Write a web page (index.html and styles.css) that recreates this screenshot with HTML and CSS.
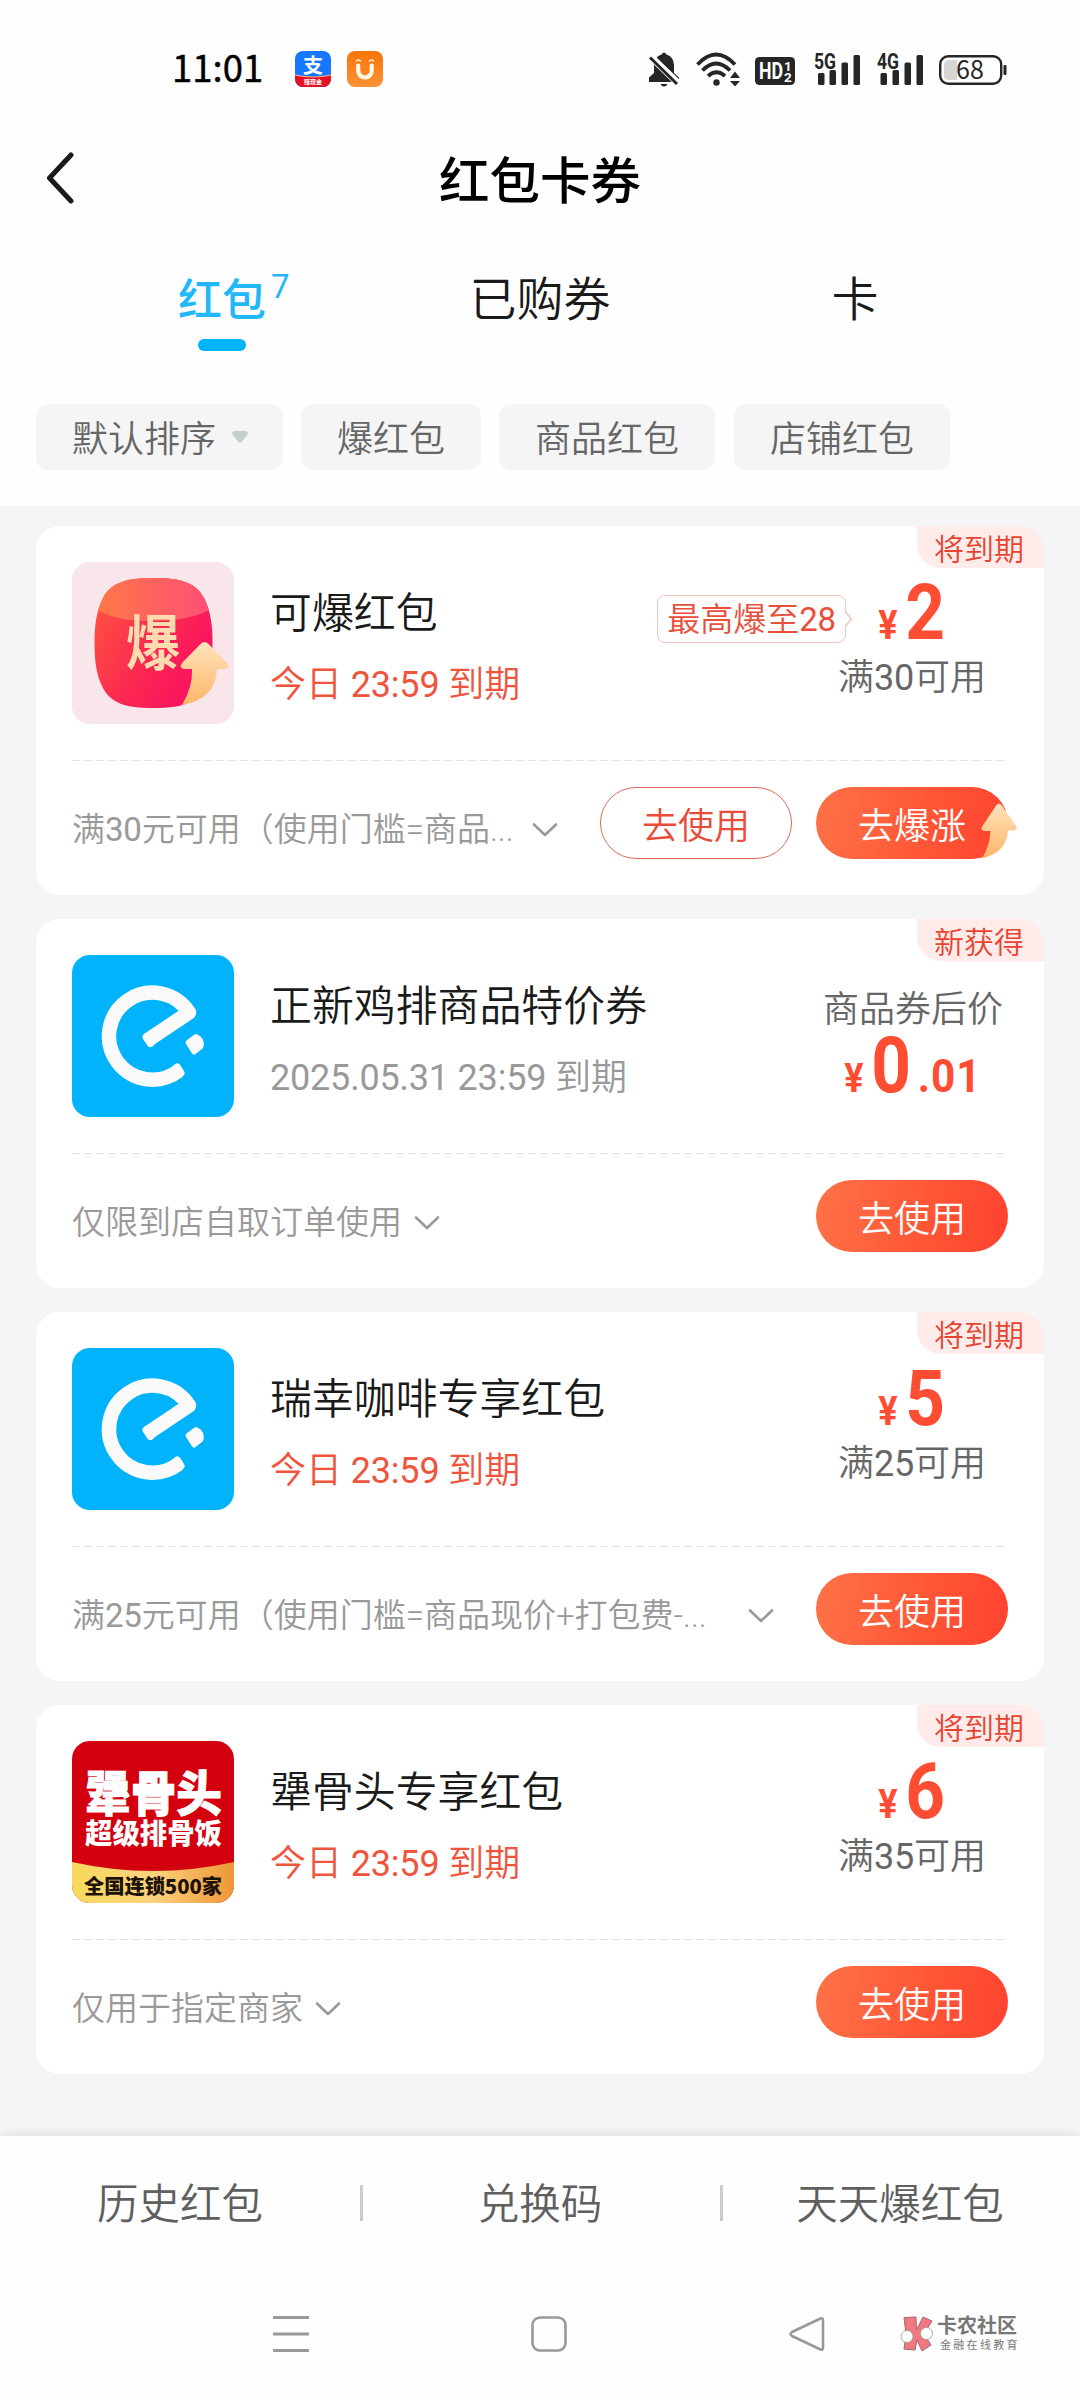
FILE: index.html
```html
<!DOCTYPE html>
<html lang="zh-CN">
<head>
<meta charset="utf-8">
<title>红包卡券</title>
<link rel="stylesheet" href="styles.css">
</head>
<body>
<svg class="defs" width="0" height="0" aria-hidden="true">
  <defs>
    <linearGradient id="arrowFill" x1="0" y1="0" x2="0" y2="1"><stop offset="0" stop-color="#ffe3bd"/><stop offset="1" stop-color="#fdb566"/></linearGradient>
    <symbol id="eleme" viewBox="0 0 162 162">
      <rect width="162" height="162" fill="#00b3fb"/>
      <path d="M106.500 116A43.500 43.500 0 1 1 117 57.500L76 85" fill="none" stroke="#fafafa" stroke-width="14.500" stroke-linejoin="round"/>
      <path d="M74.500 82L78.500 88M105 112.500L108.500 118" stroke="#fafafa" stroke-width="8" stroke-linecap="round"/>
      <path d="M116 87.500L124 81.500Q130.500 84 129 91.500L122 97Z" fill="#fafafa" stroke="#fafafa" stroke-width="5" stroke-linejoin="round"/>
    </symbol>
    <symbol id="chev" viewBox="0 0 26 16">
      <path d="M2 2.500L13 13L24 2.500" fill="none" stroke="#999" stroke-width="2.600" stroke-linecap="round" stroke-linejoin="round"/>
    </symbol>
  </defs>
</svg>

<header class="top">
  <div class="status">
    <span class="time">11:01</span>
    <svg class="app" viewBox="0 0 36 36">
      <defs><clipPath id="appClip"><rect width="36" height="36" rx="8"/></clipPath></defs>
      <g clip-path="url(#appClip)">
        <rect width="36" height="36" fill="#1677ff"/>
        <path d="M0 24Q18 28 36 24V36H0Z" fill="#e60f26"/>
        <path d="M0 24Q18 28 36 24" fill="none" stroke="#ffb48a" stroke-width="1"/>
      </g>
      <text class="app-glyph" x="18" y="21.500" text-anchor="middle">支</text>
      <text class="app-label" x="18" y="32.500" text-anchor="middle">赚现金</text>
    </svg>
    <svg class="app" viewBox="0 0 36 36">
      <defs><linearGradient id="uFill" x1="0" y1="0" x2="0" y2="1"><stop offset="0" stop-color="#f87505"/><stop offset="1" stop-color="#ff9138"/></linearGradient></defs>
      <rect width="36" height="36" rx="8" fill="url(#uFill)"/>
      <path d="M11.200 14.500V19.500A6.800 7 0 0 0 24.800 19.500V14.500" fill="none" stroke="#fff8e8" stroke-width="4.200" stroke-linecap="round"/>
      <path d="M9.400 10Q11.500 7.800 13.500 10M22.500 10Q24.500 7.800 26.600 10" fill="none" stroke="#fff0d8" stroke-width="1.500" stroke-linecap="round"/>
    </svg>
    <div class="signals">
      <svg class="s-bell" viewBox="0 0 30 40">
        <path d="M12.500 5.500Q15 1.500 17.500 5.500Q25 8 25 16V24L30 28.500V33H0V28.500L5 24V16Q5 8 12.500 5.500Z" fill="#262626"/>
        <path d="M11.500 35H18.500Q17.500 37.500 15 37.500Q12.500 37.500 11.500 35Z" fill="#262626"/>
        <path d="M-1 5L31 36" stroke="#fff" stroke-width="7"/>
        <path d="M1 8.500L28 35" stroke="#262626" stroke-width="3"/>
      </svg>
      <svg class="s-wifi" viewBox="0 0 44 40">
        <g fill="none" stroke="#262626" stroke-width="3.800">
          <path d="M1.500 15.500Q20 -4.500 39 15.500"/><path d="M6.500 21.500Q20 7.500 34 21.500"/><path d="M12 27Q20.500 19.500 29 27"/>
        </g>
        <circle cx="20.500" cy="33.500" r="3.200" fill="#262626"/>
        <path d="M39 22.500L44 29H34ZM39 37.500L44 32H34Z" fill="#262626"/>
      </svg>
      <svg class="s-hd" viewBox="0 0 40 40">
        <rect y="8" width="40" height="28" rx="4.500" fill="#262626"/>
        <text class="hd-main" x="4" y="30" textLength="24" lengthAdjust="spacingAndGlyphs">HD</text>
        <text class="hd-sub" x="29" y="21.500">1</text><text class="hd-sub" x="29" y="33">2</text>
      </svg>
      <svg class="s-5g" viewBox="0 0 46 40">
        <text class="net" x="0" y="19.500" textLength="22" lengthAdjust="spacingAndGlyphs">5G</text>
        <g fill="#262626"><rect x="4" y="24" width="6.500" height="12" rx="1.500"/><rect x="15.500" y="21" width="6.500" height="15" rx="1.500"/><rect x="27.500" y="13.500" width="6.500" height="22.500" rx="1.500"/><rect x="39.500" y="6" width="6.500" height="30" rx="1.500"/></g>
      </svg>
      <svg class="s-4g" viewBox="0 0 46 40">
        <text class="net" x="0" y="19.500" textLength="22" lengthAdjust="spacingAndGlyphs">4G</text>
        <g fill="#262626"><rect x="3.500" y="24" width="6.500" height="12" rx="1.500"/><rect x="15.500" y="21" width="6.500" height="15" rx="1.500"/><rect x="27.500" y="13.500" width="6.500" height="22.500" rx="1.500"/><rect x="39.500" y="6" width="6.500" height="30" rx="1.500"/></g>
      </svg>
      <svg class="s-bat" viewBox="0 0 68 40">
        <rect x="1.200" y="7.200" width="61" height="27.600" rx="8" fill="#fff" stroke="#262626" stroke-width="2.400"/>
        <path d="M18 11H10Q5 11 5 16V26Q5 31 10 31H18Z" fill="#d6d6d6"/>
        <rect x="64.500" y="16" width="3" height="10" rx="1" fill="#262626"/>
        <text class="bat" x="31" y="30" text-anchor="middle">68</text>
      </svg>
    </div>
  </div>
  <div class="titlebar">
    <svg class="back" viewBox="0 0 28 52"><path d="M25 3L3.500 26L25 49" fill="none" stroke="#1a1a1a" stroke-width="5" stroke-linecap="round" stroke-linejoin="round"/></svg>
    <h1>红包卡券</h1>
  </div>
  <nav class="tabs">
    <div class="tab active"><span class="tab-name">红包<sup class="count">7</sup></span><i class="bar"></i></div>
    <div class="tab"><span class="tab-name">已购券</span></div>
    <div class="tab"><span class="tab-name">卡</span></div>
  </nav>
  <div class="filters">
    <span class="chip">默认排序<svg class="caret" viewBox="0 0 16 12"><path d="M2 0H14Q17 1 15 4L10 10.500Q8 13 6 10.500L1 4Q-1 1 2 0Z" fill="#c5d1c8"/></svg></span>
    <span class="chip">爆红包</span>
    <span class="chip">商品红包</span>
    <span class="chip">店铺红包</span>
  </div>
</header>

<main class="list">
  <article class="card">
    <span class="tag">将到期</span>
    <div class="main">
      <svg class="thumb" viewBox="0 0 162 162">
        <defs>
          <linearGradient id="blob" x1="0" y1=".2" x2="1" y2=".8"><stop offset="0" stop-color="#ff5440"/><stop offset=".5" stop-color="#fb2850"/><stop offset="1" stop-color="#f80d66"/></linearGradient>
          <linearGradient id="lid" x1="0" y1="0" x2="1" y2="0"><stop offset="0" stop-color="#ff7a45"/><stop offset="1" stop-color="#fd4d78"/></linearGradient>
          <clipPath id="blobClip"><path d="M81.500 16C110 16 124 21 132 36C139 50 140.500 64 140.500 81C140.500 98 139 113 132 126C124 141 110 146 81.500 146C53 146 39 141 31 126C24 113 22.500 98 22.500 81C22.500 64 24 50 31 36C39 21 53 16 81.500 16Z"/></clipPath>
        </defs>
        <rect width="162" height="162" fill="#f8e6ea"/>
        <g clip-path="url(#blobClip)">
          <rect x="20" y="14" width="124" height="134" fill="url(#blob)"/>
          <path d="M20 14H144V44Q122 59 81 59Q40 60 20 44Z" fill="url(#lid)"/>
        </g>
        <text class="boom" x="54" y="103" textLength="54" lengthAdjust="spacingAndGlyphs">爆</text>
        <path d="M128.500 82Q132.500 78 136.500 82L155 101Q158.500 106 153 107H145Q144 137 110 143Q121 124 120 107H112Q106.500 106 110 101Z" fill="url(#arrowFill)"/>
      </svg>
      <div class="info"><h2>可爆红包</h2><p class="date soon">今日 <span class="num-text">23:59</span> 到期</p></div>
      <div class="boost">最高爆至<span class="num-text">28</span><svg class="nib" viewBox="0 0 8 18"><path d="M0 0V1.500L6.500 9L0 16.500V18" fill="#fff" stroke="#f4c4bd" stroke-width="1.500"/></svg></div>
      <div class="value"><div class="price"><span class="yen">¥</span><span class="num">2</span></div><p class="cond">满<span class="num-text">30</span>可用</p></div>
    </div>
    <div class="foot">
      <div class="desc cut"><span>满<span class="num-text">30</span>元可用（使用门槛=商品...</span><svg class="chev"><use href="#chev"/></svg></div>
      <a class="btn outline">去使用</a>
      <a class="btn">去爆涨<svg class="rise" viewBox="0 0 44 58"><path d="M20.500 4Q23 1 25.500 4L40 25Q42 29 38 29.500H32Q31 51 6 57.500Q14 44 14.500 30H8Q4 29 6.500 25Z" fill="url(#arrowFill)"/></svg></a>
    </div>
  </article>

  <article class="card">
    <span class="tag">新获得</span>
    <div class="main">
      <svg class="thumb"><use href="#eleme"/></svg>
      <div class="info"><h2>正新鸡排商品特价券</h2><p class="date"><span class="num-text">2025.05.31 23:59</span> 到期</p></div>
      <div class="value after"><p class="cond">商品券后价</p><div class="price"><span class="yen">¥</span><span class="num">0</span><span class="cents">.01</span></div></div>
    </div>
    <div class="foot">
      <div class="desc"><span>仅限到店自取订单使用</span><svg class="chev"><use href="#chev"/></svg></div>
      <a class="btn">去使用</a>
    </div>
  </article>

  <article class="card">
    <span class="tag">将到期</span>
    <div class="main">
      <svg class="thumb"><use href="#eleme"/></svg>
      <div class="info"><h2>瑞幸咖啡专享红包</h2><p class="date soon">今日 <span class="num-text">23:59</span> 到期</p></div>
      <div class="value"><div class="price"><span class="yen">¥</span><span class="num">5</span></div><p class="cond">满<span class="num-text">25</span>可用</p></div>
    </div>
    <div class="foot">
      <div class="desc cut"><span>满<span class="num-text">25</span>元可用（使用门槛=商品现价+打包费-...</span><svg class="chev"><use href="#chev"/></svg></div>
      <a class="btn">去使用</a>
    </div>
  </article>

  <article class="card">
    <span class="tag">将到期</span>
    <div class="main">
      <svg class="thumb" viewBox="0 0 162 162">
        <defs><linearGradient id="gold" x1="0" y1="0" x2="1" y2="0"><stop offset="0" stop-color="#f7da5c"/><stop offset=".5" stop-color="#fbd27e"/><stop offset="1" stop-color="#ef9636"/></linearGradient></defs>
        <rect width="162" height="162" fill="#d3000f"/>
        <path d="M0 121Q81 139 162 121V162H0Z" fill="url(#gold)"/>
        <text class="shop-a" x="13" y="70" textLength="137" lengthAdjust="spacingAndGlyphs">犟骨头</text>
        <text class="shop-b" x="13" y="102.500" textLength="137" lengthAdjust="spacingAndGlyphs">超级排骨饭</text>
        <text class="shop-c" x="12" y="152.500" textLength="138" lengthAdjust="spacingAndGlyphs">全国连锁500家</text>
      </svg>
      <div class="info"><h2>犟骨头专享红包</h2><p class="date soon">今日 <span class="num-text">23:59</span> 到期</p></div>
      <div class="value"><div class="price"><span class="yen">¥</span><span class="num">6</span></div><p class="cond">满<span class="num-text">35</span>可用</p></div>
    </div>
    <div class="foot">
      <div class="desc"><span>仅用于指定商家</span><svg class="chev"><use href="#chev"/></svg></div>
      <a class="btn">去使用</a>
    </div>
  </article>
</main>

<footer class="bottom">
  <div class="links"><a>历史红包</a><a>兑换码</a><a>天天爆红包</a></div>
  <div class="sysnav">
    <svg viewBox="0 0 36 36"><path d="M0 1.500H36M0 18H36M0 34.500H36" stroke="#999" stroke-width="3"/></svg>
    <svg viewBox="0 0 36 36"><rect x="1.500" y="1.500" width="33" height="33" rx="7.500" fill="none" stroke="#999" stroke-width="2.600"/></svg>
    <svg viewBox="0 0 36 36"><path d="M31.500 2.500Q34 1.500 34 4.500V31.500Q34 34.500 31.500 33.500L3 20Q0 18 3 16Z" fill="none" stroke="#999" stroke-width="2.600" stroke-linejoin="round"/></svg>
    <div class="mark">
      <svg class="mark-logo" viewBox="0 0 34 36">
        <path d="M4 1.500L16 1L16.500 14L23 1L32 5L24 18L31 29L22 35L17 24L15 34L4 33L6 18Z" fill="#f07882" stroke="#a5666c" stroke-width="1"/>
        <circle cx="7" cy="20.500" r="6" fill="#fff" stroke="#999" stroke-width=".8"/><circle cx="26.500" cy="17.500" r="6" fill="#fff" stroke="#999" stroke-width=".8"/>
      </svg>
      <div class="mark-text"><b>卡农社区</b><small>金融在线教育</small></div>
    </div>
  </div>
</footer>
</body>
</html>
```
FILE: styles.css
```css
* { box-sizing: border-box; margin: 0; padding: 0; }
body {
  width: 1080px;
  height: 2400px;
  display: flex;
  flex-direction: column;
  background: #f5f5f5;
  font-family: Roboto, "Noto Sans CJK SC", sans-serif;
  font-weight: 350;
  color: #1a1a1a;
  overflow: hidden;
}
svg { display: block; flex: none; }
.defs { position: absolute; }
.top { height: 506px; background: #fefefe; }
.num-text { font-weight: 400; letter-spacing: -.2px; }

/* status bar */
.status { height: 138px; display: flex; align-items: center; padding-left: 172px; }
.time { width: 90px; margin-top: -4px; font: 400 36.5px/40px "Noto Sans CJK SC", sans-serif; -webkit-text-stroke: .4px #000; color: #000; white-space: nowrap; }
.app { width: 36px; height: 36px; margin-left: 16px; }
.time + .app { margin-left: 33px; }
.app-glyph { font: 700 20px "Noto Sans CJK SC", sans-serif; fill: #fff; }
.app-label { font: 700 6px "Noto Sans CJK SC", sans-serif; fill: #fff; }
.signals { display: flex; align-items: center; margin-left: 266px; height: 42px; }
.signals svg { height: 40px; margin-top: -1px; }
.s-bell { width: 30px; margin-right: 17px; }
.s-wifi { width: 44px; margin-right: 15px; }
.s-hd { width: 40px; margin-right: 19px; }
.s-5g { width: 46px; margin-right: 17px; }
.s-4g { width: 46px; margin-right: 16px; }
.s-bat { width: 68px; }
.hd-main { font: 700 23px Roboto, sans-serif; fill: #fff; }
.hd-sub { font: 700 13.5px Roboto, sans-serif; fill: #fff; }
.net { font: 700 22px Roboto, sans-serif; fill: #262626; }
.bat { font: 400 25px "Noto Sans CJK SC", sans-serif; fill: #262626; }

/* title */
.titlebar { height: 78px; display: grid; grid-template-columns: 1fr auto 1fr; align-items: center; padding: 0 46px; }
.back { width: 28px; height: 52px; margin-top: -4px; }
h1 { font-size: 50.5px; line-height: 78px; font-weight: 500; color: #000; padding-top: 5px; }

/* tabs */
.tabs { height: 188px; display: grid; grid-template-columns: repeat(3, 315px); justify-content: center; padding-top: 60px; }
.tab { display: flex; flex-direction: column; align-items: center; font-size: 47px; line-height: 48px; }
.tab.active { padding-right: 6px; font-size: 44px; line-height: 50px; font-weight: 500; color: #22b8f8; }
.tab-name { position: relative; }
.count { position: absolute; left: 93px; top: -14px; font-size: 33px; line-height: 50px; font-weight: 400; }
.bar { width: 48px; height: 12px; margin-top: 13px; border-radius: 6px; background: #00b3fb; }

/* filters */
.filters { display: flex; gap: 18px; padding-left: 36px; }
.chip { display: flex; align-items: center; height: 66px; padding: 6px 36px 0; border-radius: 12px; background: #f5f5f5; font-size: 36px; line-height: 60px; color: #666; }
.chip:last-child { margin-left: 1px; }
.caret { width: 16px; height: 12px; margin: -6px -1px 0 16px; }

/* coupons */
.list { flex: none; height: 1630px; padding: 20px 36px 0; display: flex; flex-direction: column; gap: 24px; }
.card { position: relative; flex: none; height: 369px; border-radius: 24px; background: #fff; padding: 0 36px; }
.tag { position: absolute; top: 0; right: 0; height: 42px; padding: 2px 20px 0 17px; border-radius: 0 24px 0 24px; background: #ffecea; color: #e8432f; font-size: 30px; line-height: 43px; }
.main { height: 235px; display: flex; padding-top: 36px; background: repeating-linear-gradient(90deg, #e2e2e2 0 8px, transparent 8px 12px) left bottom / 936px 1px no-repeat; }
.thumb { width: 162px; height: 162px; border-radius: 18px; overflow: hidden; }
.boom { font: 700 60px "Noto Sans CJK SC", sans-serif; fill: #ffdcb0; }
.shop-a { font: 900 48px "Noto Sans CJK SC", sans-serif; fill: #fff; stroke: #fff; stroke-width: 1px; }
.shop-b { font: 900 28px "Noto Sans CJK SC", sans-serif; fill: #fff; }
.shop-c { font: 900 20px "Noto Sans CJK SC", sans-serif; fill: #1c1208; }
.info { flex: 1; padding: 26px 0 0 36px; }
h2 { font-size: 41.9px; line-height: 52px; font-weight: 350; white-space: nowrap; }
.date { margin-top: 18px; font-size: 36px; line-height: 54px; color: #999; white-space: nowrap; }
.date.soon { color: #f0543c; }
.value { flex: none; width: 192px; height: 162px; display: flex; flex-direction: column; align-items: center; }
.price { height: 89px; display: flex; align-items: baseline; justify-content: center; font-weight: 700; color: #ff4d33; line-height: 102px; }
.yen { font-size: 41px; transform: scaleX(.88); }
.num { font-size: 77px; margin-left: 4px; transform: scaleX(.9); }
.cents { font-size: 46px; letter-spacing: 1px; margin-left: 2px; transform: scaleX(.92); }
.cond { font-size: 36px; line-height: 54px; color: #666; white-space: nowrap; }
.value.after { padding-top: 28px; }
.value.after .cond { margin-right: -2px; }
.value.after .price { height: 66px; margin-top: -22px; margin-right: -3px; }
.boost { position: relative; flex: none; width: 189px; height: 48px; margin: 33px -30px 0 0; border: 1.5px solid #f4c4bd; border-radius: 8px; font-size: 33px; line-height: 48px; text-align: center; color: #e94f3b; }
.nib { position: absolute; right: -8px; top: 14px; width: 8px; height: 18px; }
.foot { display: flex; align-items: center; height: 72px; margin-top: 26px; }
.desc { flex: 1; min-width: 0; display: flex; align-items: center; margin-right: 42px; font-size: 33px; line-height: 50px; color: #999; white-space: nowrap; padding-top: 13px; }
.desc.cut > span { flex: 1; }
.chev { width: 26px; height: 16px; margin-left: 12px; }
.btn { position: relative; flex: none; width: 192px; height: 72px; padding-top: 3px; border-radius: 36px; background: linear-gradient(100deg, #ff7248, #ff5535 60%, #ff422f); color: #fff; font-size: 36px; line-height: 74px; text-align: center; }
.btn + .btn { margin-left: 24px; }
.btn.outline { background: none; border: 1.5px solid #dc6a55; color: #ea4a38; line-height: 72px; }
.rise { position: absolute; left: 160px; top: 14px; width: 44px; height: 58px; }

/* bottom */
.bottom { flex: 1; background: #fefefe; box-shadow: 0 0 12px rgba(0, 0, 0, .12); }
.links { height: 136px; display: grid; grid-template-columns: repeat(3, 1fr); align-items: center; }
.links a { position: relative; font-size: 41.5px; line-height: 60px; padding-top: 2px; text-align: center; color: #5f5f5f; }
.links a + a::before { content: ""; position: absolute; left: 0; top: 12px; width: 3px; height: 36px; background: #ccc; }
.sysnav { display: flex; align-items: center; padding-left: 273px; margin-top: 44px; height: 36px; }
.sysnav > svg { width: 36px; height: 36px; }
.sysnav > svg + svg { margin-left: 222px; }
.mark { display: flex; align-items: center; margin-left: 75px; }
.mark-logo { width: 34px; height: 36px; }
.mark-text { margin-left: 3px; color: #777; }
.mark-text b { display: block; font: 700 20px/21px Roboto, "Noto Sans CJK SC", sans-serif; white-space: nowrap; }
.mark-text small { display: block; font: 400 11px/14px Roboto, "Noto Sans CJK SC", sans-serif; letter-spacing: 2.3px; margin: 2px 0 0 3px; white-space: nowrap; }
```
